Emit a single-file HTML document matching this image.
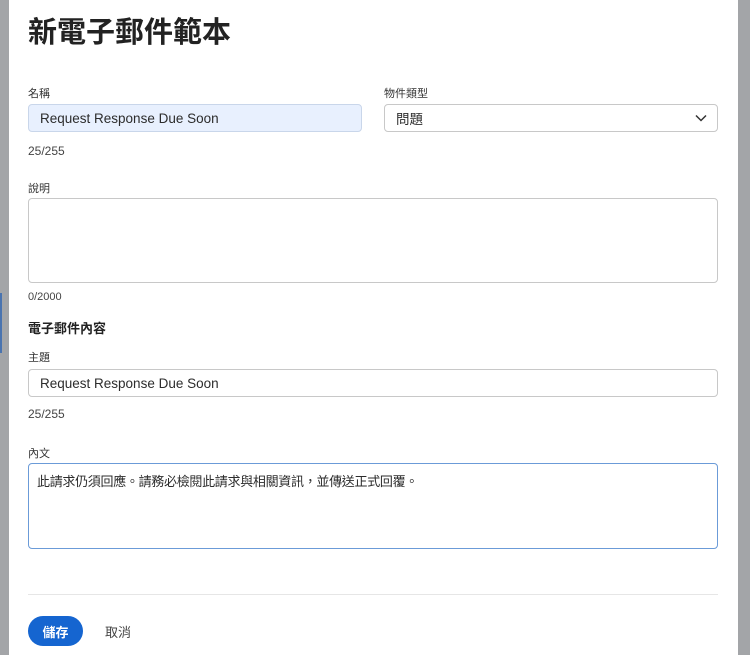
<!DOCTYPE html>
<html><head><meta charset="utf-8"><style>
*{box-sizing:border-box;margin:0;padding:0}
body{width:750px;height:655px;overflow:hidden;background:#a3a5a8;font-family:"Liberation Sans","Noto Sans CJK TC",sans-serif;color:#2c2c2c;position:relative}
.modal{position:absolute;left:9px;top:0;width:729px;height:655px;background:#fff}
.a{position:absolute}
.lbl{font-size:11px;color:#333}
.cnt{font-size:12px;color:#444}
.inp{border:1px solid #c8c8c8;border-radius:4px;background:#fff;font-size:13.5px;padding-left:11px;display:flex;align-items:center}
</style></head><body>
<div class="modal"></div>
<div class="a" style="left:0;top:293px;width:2px;height:60px;background:#4a74b0"></div>
<div class="a" style="left:28px;top:9px;font-size:29px;font-weight:bold;color:#222">新電子郵件範本</div>
<div class="a lbl" style="left:28px;top:85px">名稱</div>
<div class="a inp" style="left:28px;top:104px;width:334px;height:28px;background:#e8f0fe;border-color:#c9d6ea">Request Response Due Soon</div>
<div class="a lbl" style="left:384px;top:85px">物件類型</div>
<div class="a inp" style="left:384px;top:104px;width:334px;height:28px">問題
<svg class="a" style="right:10px;top:9px" width="12" height="8" viewBox="0 0 12 8"><path d="M1 1.5L6 6.5L11 1.5" fill="none" stroke="#333" stroke-width="1.5"/></svg></div>
<div class="a cnt" style="left:28px;top:144px">25/255</div>
<div class="a lbl" style="left:28px;top:180px">說明</div>
<div class="a inp" style="left:28px;top:198px;width:690px;height:85px"></div>
<div class="a cnt" style="left:28px;top:291px;font-size:11px">0/2000</div>
<div class="a" style="left:28px;top:318px;font-size:13px;font-weight:bold;color:#222">電子郵件內容</div>
<div class="a lbl" style="left:28px;top:349px">主題</div>
<div class="a inp" style="left:28px;top:369px;width:690px;height:28px">Request Response Due Soon</div>
<div class="a cnt" style="left:28px;top:407px">25/255</div>
<div class="a lbl" style="left:28px;top:445px">內文</div>
<div class="a inp" style="left:28px;top:463px;width:690px;height:86px;border-color:#6b9bd8;align-items:flex-start;padding:7px 0 0 8px;font-size:13px;letter-spacing:-0.3px">此請求仍須回應。請務必檢閱此請求與相關資訊，並傳送正式回覆。</div>
<div class="a" style="left:28px;top:594px;width:690px;height:1px;background:#e6e6e6"></div>
<div class="a" style="left:28px;top:616px;width:55px;height:30px;border-radius:15px;background:#1565d0;color:#fff;font-size:13px;font-weight:bold;display:flex;align-items:center;justify-content:center">儲存</div>
<div class="a" style="left:105px;top:622px;font-size:13px;color:#444">取消</div>
</body></html>
